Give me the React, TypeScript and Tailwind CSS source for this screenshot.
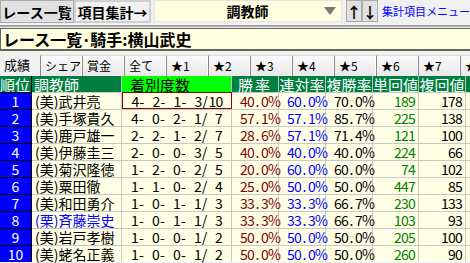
import React from 'react';

type Row = {
  rank: number;
  name: string;
  stable?: boolean;
  record: string;
  win: string;
  ren: string;
  fuku: string;
  tan: string;
  fukuKai: string;
};

const rows: Row[] = [
  { rank: 1, name: '(美)武井亮', record: '4- 2- 1- 3/10', win: '40.0%', ren: '60.0%', fuku: '70.0%', tan: '189', fukuKai: '178' },
  { rank: 2, name: '(美)手塚貴久', record: '4- 0- 2- 1/ 7', win: '57.1%', ren: '57.1%', fuku: '85.7%', tan: '225', fukuKai: '138' },
  { rank: 3, name: '(美)鹿戸雄一', record: '2- 2- 1- 2/ 7', win: '28.6%', ren: '57.1%', fuku: '71.4%', tan: '121', fukuKai: '100' },
  { rank: 4, name: '(美)伊藤圭三', record: '2- 0- 0- 3/ 5', win: '40.0%', ren: '40.0%', fuku: '40.0%', tan: '224', fukuKai: '66' },
  { rank: 5, name: '(美)菊沢隆徳', record: '1- 2- 0- 2/ 5', win: '20.0%', ren: '60.0%', fuku: '60.0%', tan: '74', fukuKai: '102' },
  { rank: 6, name: '(美)粟田徹', record: '1- 1- 0- 2/ 4', win: '25.0%', ren: '50.0%', fuku: '50.0%', tan: '447', fukuKai: '85' },
  { rank: 7, name: '(美)和田勇介', record: '1- 0- 1- 1/ 3', win: '33.3%', ren: '33.3%', fuku: '66.7%', tan: '230', fukuKai: '133' },
  { rank: 8, name: '(栗)斉藤崇史', stable: true, record: '1- 0- 1- 1/ 3', win: '33.3%', ren: '33.3%', fuku: '66.7%', tan: '103', fukuKai: '93' },
  { rank: 9, name: '(美)岩戸孝樹', record: '1- 0- 0- 1/ 2', win: '50.0%', ren: '50.0%', fuku: '50.0%', tan: '205', fukuKai: '100' },
  { rank: 10, name: '(美)蛯名正義', record: '1- 0- 0- 1/ 2', win: '50.0%', ren: '50.0%', fuku: '50.0%', tan: '260', fukuKai: '90' },
];

const tabs = ['シェア', '賞金', '全て', '★1', '★2', '★3', '★4', '★5', '★6', '★7', '★8'];

// fixed 7px per character, like the old bitmap font
function Mono({ text }: { text: string }) {
  return (
    <span className="inline-flex">
      {text.split('').map((c, i) => (
        <span key={i} className="w-[7px] text-center">
          {c}
        </span>
      ))}
    </span>
  );
}

export default function App() {
  return (
    <div className="w-[470px] h-[263px] overflow-hidden bg-[#f0f0f0] text-black font-['Noto_Sans_CJK_JP',sans-serif] leading-none">
      {/* toolbar */}
      <div className="flex items-start h-[24px]">
        <button className="h-[23px] w-[74px] shrink-0 flex items-center justify-center bg-[#e1e1e1] border border-[#adadad] text-[14px] font-bold">
          レース一覧
        </button>
        <button className="h-[23px] w-[77px] shrink-0 flex items-center justify-center bg-[#f2f2f2] border-2 border-[#cfcfcf] text-[14px] font-bold">
          項目集計→
        </button>
        <div className="ml-[3px] h-[22px] w-[188px] shrink-0 flex items-center bg-[#ffffe0] border border-[#e4e4e4]">
          <span className="flex-1 text-center pl-[16px] text-[14px] font-bold">調教師</span>
          <svg width="12" height="8" viewBox="0 0 12 8" className="mr-[5px]">
            <path d="M0 0 L12 0 L6 8 Z" fill="#7a7a7a" />
          </svg>
        </div>
        <button className="ml-[4px] h-[22px] w-[16px] shrink-0 flex items-center justify-center bg-[#e1e1e1] border border-[#adadad] text-[15px] font-bold">
          ↑
        </button>
        <button className="h-[22px] w-[16px] shrink-0 flex items-center justify-center bg-[#e1e1e1] border border-[#adadad] text-[15px] font-bold">
          ↓
        </button>
        <span className="ml-[4px] h-[22px] flex items-center text-[11px] text-[#0000ff] whitespace-nowrap">集計項目メニュー</span>
      </div>

      <div className="mt-px h-[2px] bg-[#a6a6a6]" />

      {/* title */}
      <div className="mt-px h-[23px] flex items-center bg-[#ffffe0] border-t border-b-2 border-l border-[#646464] pl-[2px] text-[16px] font-bold">
        レース一覧･騎手:横山武史
      </div>

      {/* tabs */}
      <div className="mt-[2px] h-[23px] flex items-end text-[12px] overflow-hidden">
        <div className="h-[23px] w-[40px] shrink-0 flex items-center pl-[4px] bg-[#f0f0f0] whitespace-nowrap text-[13px]">成績</div>
        {tabs.map((t) => (
          <div
            key={t}
            className="h-[21px] w-[42px] shrink-0 flex items-center pl-[4px] bg-gradient-to-b from-[#fafafa] to-[#e8e8e8] border-t border-l border-r border-t-[#dadada] border-l-[#8a8a8a] border-r-white whitespace-nowrap overflow-hidden"
          >
            {t}
          </div>
        ))}
      </div>

      {/* grid header */}
      <div className="flex h-[16px] text-[15px] text-white bg-[#008040] whitespace-nowrap">
        <div className="w-[32px] shrink-0 flex items-center border-r border-black">順位</div>
        <div className="w-[90px] shrink-0 flex items-center pl-[2px] border-r border-[#c0c0c0]">調教師</div>
        <div className="w-[110px] shrink-0 flex items-center pl-[8px] bg-[#00ff00] text-black border-r border-[#c0c0c0]">着別度数</div>
        <div className="w-[47px] shrink-0 flex items-center justify-center tracking-[2px] border-r border-[#c0c0c0]">勝率</div>
        <div className="w-[47px] shrink-0 flex items-center justify-center border-r border-[#c0c0c0]">連対率</div>
        <div className="w-[47px] shrink-0 flex items-center justify-center border-r border-[#c0c0c0]">複勝率</div>
        <div className="w-[46px] shrink-0 flex items-center justify-center border-r border-[#c0c0c0]">単回値</div>
        <div className="w-[47px] shrink-0 flex items-center justify-center border-r border-[#c0c0c0]">複回値</div>
        <div className="w-[4px] shrink-0" />
      </div>

      {/* rows */}
      {rows.map((r) => (
        <div key={r.rank} className="flex h-[17px] text-[14px] bg-[#ffffe6]">
          <div className="w-[32px] shrink-0 flex items-center justify-center bg-[#0000ff] text-white border-r border-t border-black">
            {r.rank}
          </div>
          <div
            className={`w-[90px] shrink-0 flex items-center pl-[3px] whitespace-nowrap border-r border-t border-[#c8c8c8] ${
              r.stable ? 'text-[#0000ff]' : ''
            }`}
          >
            {r.name}
          </div>
          <div
            className={`w-[110px] shrink-0 flex items-center justify-center whitespace-pre ${
              r.rank === 1 ? 'border border-[#8b0000]' : 'border-r border-t border-[#c8c8c8]'
            }`}
          >
            <Mono text={r.record} />
          </div>
          <div className="w-[47px] shrink-0 flex items-center justify-end pr-[3px] text-[#800000] border-r border-t border-[#c8c8c8]">
            <Mono text={r.win} />
          </div>
          <div className="w-[47px] shrink-0 flex items-center justify-end pr-[3px] text-[#0000ff] border-r border-t border-[#c8c8c8]">
            <Mono text={r.ren} />
          </div>
          <div className="w-[47px] shrink-0 flex items-center justify-end pr-[3px] border-r border-t border-[#c8c8c8]">
            <Mono text={r.fuku} />
          </div>
          <div className="w-[46px] shrink-0 flex items-center justify-end pr-[3px] text-[#008000] border-r border-t border-[#c8c8c8]">
            <Mono text={r.tan} />
          </div>
          <div className="w-[47px] shrink-0 flex items-center justify-end pr-[3px] border-r border-t border-[#c8c8c8]">
            <Mono text={r.fukuKai} />
          </div>
          <div className="w-[4px] shrink-0 border-t border-[#c8c8c8]" />
        </div>
      ))}
    </div>
  );
}
